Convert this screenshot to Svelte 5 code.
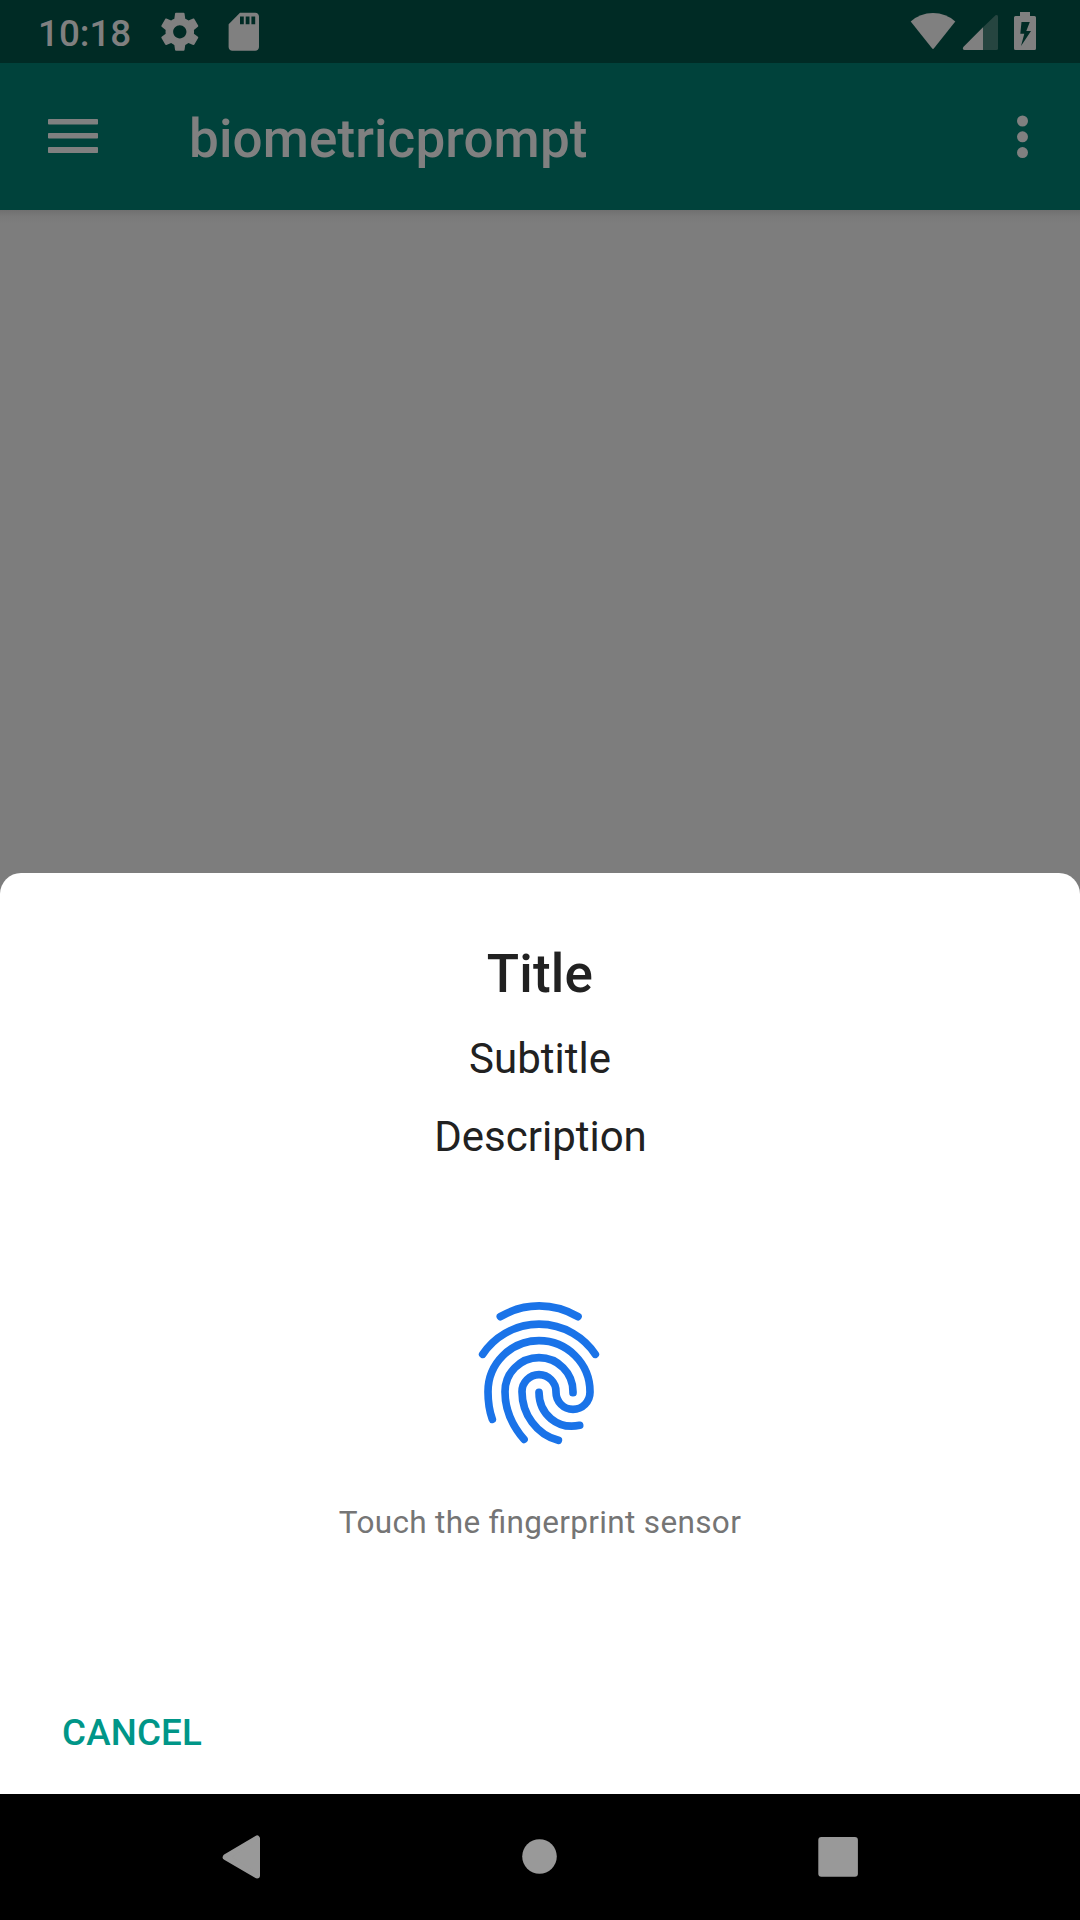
<script>
  const app = 'biometricprompt';
</script>

<div class="screen">
  <div class="status">
    <span class="clock">10:18</span>
    <svg class="gear" viewBox="0 0 24 24"><path d="M19.43 12.98c.04-.32.07-.64.07-.98s-.03-.66-.07-.98l2.11-1.65c.19-.15.24-.42.12-.64l-2-3.46c-.12-.22-.39-.3-.61-.22l-2.49 1c-.52-.4-1.08-.73-1.69-.98l-.38-2.65C14.46 2.18 14.25 2 14 2h-4c-.25 0-.46.18-.49.42l-.38 2.65c-.61.25-1.17.59-1.69.98l-2.49-1c-.23-.09-.49 0-.61.22l-2 3.46c-.13.22-.07.49.12.64l2.11 1.65c-.04.32-.07.65-.07.98s.03.66.07.98l-2.11 1.65c-.19.15-.24.42-.12.64l2 3.46c.12.22.39.3.61.22l2.49-1c.52.4 1.08.73 1.69.98l.38 2.65c.03.24.24.42.49.42h4c.25 0 .46-.18.49-.42l.38-2.65c.61-.25 1.17-.59 1.69-.98l2.49 1c.23.09.49 0 .61-.22l2-3.46c.12-.22.07-.49-.12-.64l-2.11-1.65zM12 15.5c-1.93 0-3.5-1.57-3.5-3.5s1.57-3.5 3.5-3.5 3.5 1.57 3.5 3.5-1.57 3.5-3.5 3.5z" /></svg>
    <svg class="card" viewBox="0 0 24 24"><path d="M18 2h-8L4.020 8 4 20c0 1.100.9 2 2 2h12c1.100 0 2-.9 2-2V4c0-1.100-.9-2-2-2zm-6 6h-2V4h2v4zm3 0h-2V4h2v4zm3 0h-2V4h2v4z" /></svg>
    <svg class="system" viewBox="0 0 140 63">
      <path d="M10.700 21.500Q20 13 33 13T55.300 21.500L34 48.300Q33 49.500 32 48.300Z" />
      <path class="dim" d="M83 27.300L95.500 15.300Q98 14.200 98 16.500V48.500Q98 50 96.500 50H83Z" />
      <path d="M83 27.300V50H64.500Q62 49.500 63.300 47Z" />
      <path fill-rule="evenodd" d="M120 12h10v4h4.500q1.500 0 1.500 1.500v31q0 1.500-1.500 1.500h-19q-1.500 0-1.500-1.500v-31q0-1.500 1.500-1.500h4.500zM121.500 22l-1.200 11.700h4l-3.300 12.300 10-15h-4.700l3.500-9z" />
    </svg>
  </div>

  <header>
    <svg class="menu" viewBox="0 0 50 35"><rect y="0" width="50" height="5.500" rx=".8" /><rect y="14" width="50" height="5.500" rx=".8" /><rect y="28" width="50" height="6" rx=".8" /></svg>
    <h1>{app}</h1>
    <svg class="more" viewBox="0 0 12 44"><circle cx="5.500" cy="6" r="5.500" /><circle cx="5.500" cy="21.800" r="5.500" /><circle cx="5.500" cy="37.600" r="5.500" /></svg>
  </header>

  <main></main>

  <section class="sheet">
    <h2>Title</h2>
    <p class="subtitle">Subtitle</p>
    <p class="description">Description</p>
    <svg class="finger" viewBox="0 0 480 540">
      <path d="M121 110C194 67 281 67 354 110" />
      <path d="M68 223A203 203 0 0 1 406 223" />
      <path d="M97 418C88 392 84 365 84 335A153 153 0 0 1 390 335V337A51 51 0 0 1 288 337V335A51 51 0 0 0 186 335C186 402 230 464 295 481" />
      <path d="M192 478C155 435 135 390 135 335A102 102 0 0 1 339 335V338" />
      <path d="M237 337C237 402 292 450 359 436" />
    </svg>
    <p class="hint">Touch the fingerprint sensor</p>
    <button>CANCEL</button>
  </section>

  <nav>
    <svg viewBox="0 0 60 60"><path class="back" d="M14.700 30.200L46 11.500V48.500Z" /></svg>
    <svg viewBox="0 0 60 60"><circle cx="29.500" cy="29.500" r="17.300" /></svg>
    <svg viewBox="0 0 60 60"><rect x="10.300" y="10" width="39.600" height="39.800" rx="3" /></svg>
  </nav>
</div>

<style>
  :global(body) { margin: 0; }
  .screen {
    width: 1080px;
    height: 1920px;
    display: flex;
    flex-direction: column;
    background: #7d7d7d;
    font-family: Roboto, sans-serif;
    overflow: hidden;
  }
  svg { display: block; flex: none; fill: #808080; }
  h1, h2, p { margin: 0; }
  .status {
    height: 63px;
    flex: none;
    display: flex;
    align-items: center;
    background: #002b25;
    color: #808080;
  }
  .clock {
    width: 119.300px;
    padding: 4px 0 0 38px;
    font-size: 36.750px;
    line-height: 44px;
    font-weight: 500;
  }
  .gear, .card { width: 45.600px; height: 45.600px; }
  .card { margin-left: 18px; }
  .system { width: 140px; height: 63px; margin-left: auto; margin-right: 40px; }
  .dim { fill: #264540; }
  header {
    height: 147px;
    flex: none;
    display: flex;
    align-items: center;
    padding: 0 51px 0 48px;
    box-sizing: border-box;
    background: #00423b;
    color: #808080;
  }
  .menu { width: 50px; height: 35px; }
  h1 {
    flex: 1;
    margin-left: 91px;
    padding-top: 4px;
    font-size: 53px;
    line-height: 62px;
    font-weight: 500;
    letter-spacing: .1px;
  }
  .more { width: 12px; height: 44px; }
  main {
    flex: 1;
    background: linear-gradient(#707070, #797979 6px, #7d7d7d 14px);
  }
  .sheet {
    height: 921px;
    flex: none;
    box-sizing: border-box;
    padding-top: 70px;
    display: flex;
    flex-direction: column;
    align-items: center;
    color: #212121;
    background: #fff;
    border-radius: 21px 21px 0 0;
  }
  h2 { font-size: 53px; line-height: 62px; font-weight: 500; letter-spacing: .2px; }
  .subtitle, .description { font-size: 42px; line-height: 50px; }
  .subtitle { margin-top: 29px; }
  .description { margin-top: 28px; padding-left: 1px; }
  .finger {
    width: 160px;
    height: 180px;
    margin-top: 118px;
    fill: none;
    stroke: #1a73e8;
    stroke-width: 23;
    stroke-linecap: round;
    stroke-linejoin: round;
  }
  .hint {
    margin-top: 44px;
    font-size: 31.500px;
    line-height: 38px;
    letter-spacing: .34px;
    font-feature-settings: "liga" 1;
    color: #757575;
  }
  button {
    align-self: flex-start;
    margin: 169px 0 0 62px;
    padding: 0;
    border: 0;
    background: none;
    color: #009688;
    font: 500 36.750px/44px Roboto, sans-serif;
    letter-spacing: .15px;
  }
  nav {
    height: 126px;
    flex: none;
    display: flex;
    align-items: center;
    justify-content: center;
    gap: 238.500px;
    box-sizing: border-box;
    padding-right: 1px;
    background: #000;
  }
  nav svg { width: 60px; height: 60px; fill: #999; }
  .back { stroke: #999; stroke-width: 6; stroke-linejoin: round; }
</style>
